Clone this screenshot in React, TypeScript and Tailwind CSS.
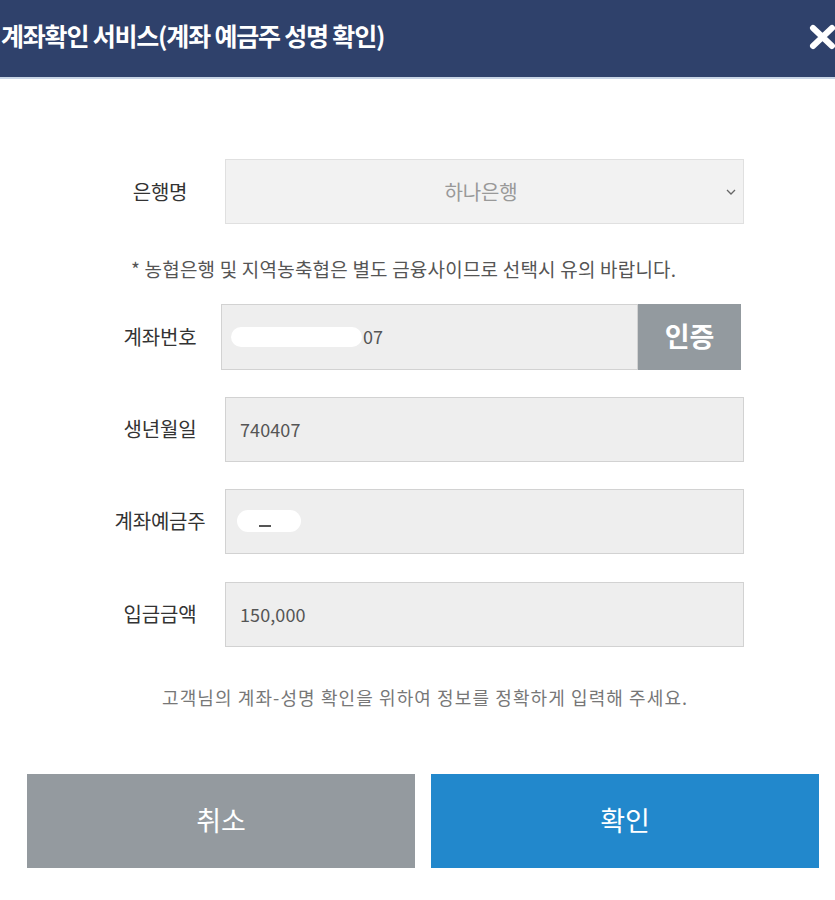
import React from 'react';

const font = { fontFamily: '"Noto Sans CJK KR", "Noto Sans", sans-serif' };

function Label({ children }: { children: React.ReactNode }) {
  return (
    <div className="w-[120px] shrink-0 text-center text-[20px] tracking-[-0.2px] text-[#333]">
      {children}
    </div>
  );
}

function Field({ children }: { children?: React.ReactNode }) {
  return (
    <div className="ml-[5px] flex h-[65px] w-[519px] items-center border border-[#d2d2d2] bg-[#eeeeee] pl-[14px] text-[18px] tracking-[0.1px] text-[#555]">
      {children}
    </div>
  );
}

export default function App() {
  return (
    <div className="w-[835px] h-[900px] bg-white overflow-hidden" style={font}>
      {/* Header */}
      <div className="flex h-[79px] items-center justify-between border-b-2 border-[#c9d5e6] bg-[#2f416b] pl-[1px]">
        <h1 className="mt-[-5px] text-[25px] font-bold tracking-[-1.2px] text-white">
          계좌확인 서비스(계좌 예금주 성명 확인)
        </h1>
        <svg className="mr-[-1px] mt-[-4px]" width="27" height="26" viewBox="0 0 27 26">
          <path d="M4 4 L23 22 M23 4 L4 22" stroke="white" strokeWidth="6" strokeLinecap="round" />
        </svg>
      </div>

      {/* Form */}
      <div className="pl-[100px] pt-[80px]">
        <div className="flex items-center">
          <Label>은행명</Label>
          <div className="ml-[5px] flex h-[65px] w-[519px] items-center border border-[#e0e0e0] bg-[#f2f2f2] text-[20px] tracking-[-0.2px] text-[#999]">
            <span className="flex-1 text-center pl-[10px]">하나은행</span>
            <svg className="mr-[7px]" width="10" height="6" viewBox="0 0 10 6">
              <path d="M1 1 L5 5 L9 1" stroke="#666" strokeWidth="1.3" fill="none" />
            </svg>
          </div>
        </div>

        <p className="mt-[31px] ml-[31px] text-[19px] tracking-[0.2px] text-[#555]">
          * 농협은행 및 지역농축협은 별도 금융사이므로 선택시 유의 바랍니다.
        </p>

        <div className="mt-[20px] flex items-center">
          <Label>계좌번호</Label>
          <div className="ml-[1px] flex h-[66px] w-[520px]">
            <div className="flex flex-1 items-center border border-[#d2d2d2] bg-[#eeeeee] pl-[9px] text-[18px] text-[#555]">
              <span className="h-[20px] w-[131px] rounded-full bg-white" />
              <span className="ml-[1px]">07</span>
            </div>
            <button className="w-[103px] bg-[#939a9f] text-[27px] font-bold text-white">
              인증
            </button>
          </div>
        </div>

        <div className="mt-[27px] flex items-center">
          <Label>생년월일</Label>
          <Field>740407</Field>
        </div>

        <div className="mt-[27px] flex items-center">
          <Label>계좌예금주</Label>
          <Field>
            <span className="relative ml-[-3px] h-[22px] w-[64px] rounded-full bg-white">
              <span className="absolute left-[22px] top-[15px] h-[1.5px] w-[12px] bg-[#555]" />
            </span>
          </Field>
        </div>

        <div className="mt-[28px] flex items-center">
          <Label>입금금액</Label>
          <Field>150,000</Field>
        </div>
      </div>

      <p className="mt-[37px] pl-[162px] text-[18px] tracking-[1.1px] text-[#777]">
        고객님의 계좌-성명 확인을 위하여 정보를 정확하게 입력해 주세요.
      </p>

      {/* Buttons */}
      <div className="mt-[63px] flex gap-[16px] pl-[27px]">
        <button className="h-[94px] w-[388px] bg-[#949a9f] text-[27px] text-white">
          취소
        </button>
        <button className="h-[94px] w-[388px] bg-[#2288cc] text-[27px] text-white">
          확인
        </button>
      </div>
    </div>
  );
}
